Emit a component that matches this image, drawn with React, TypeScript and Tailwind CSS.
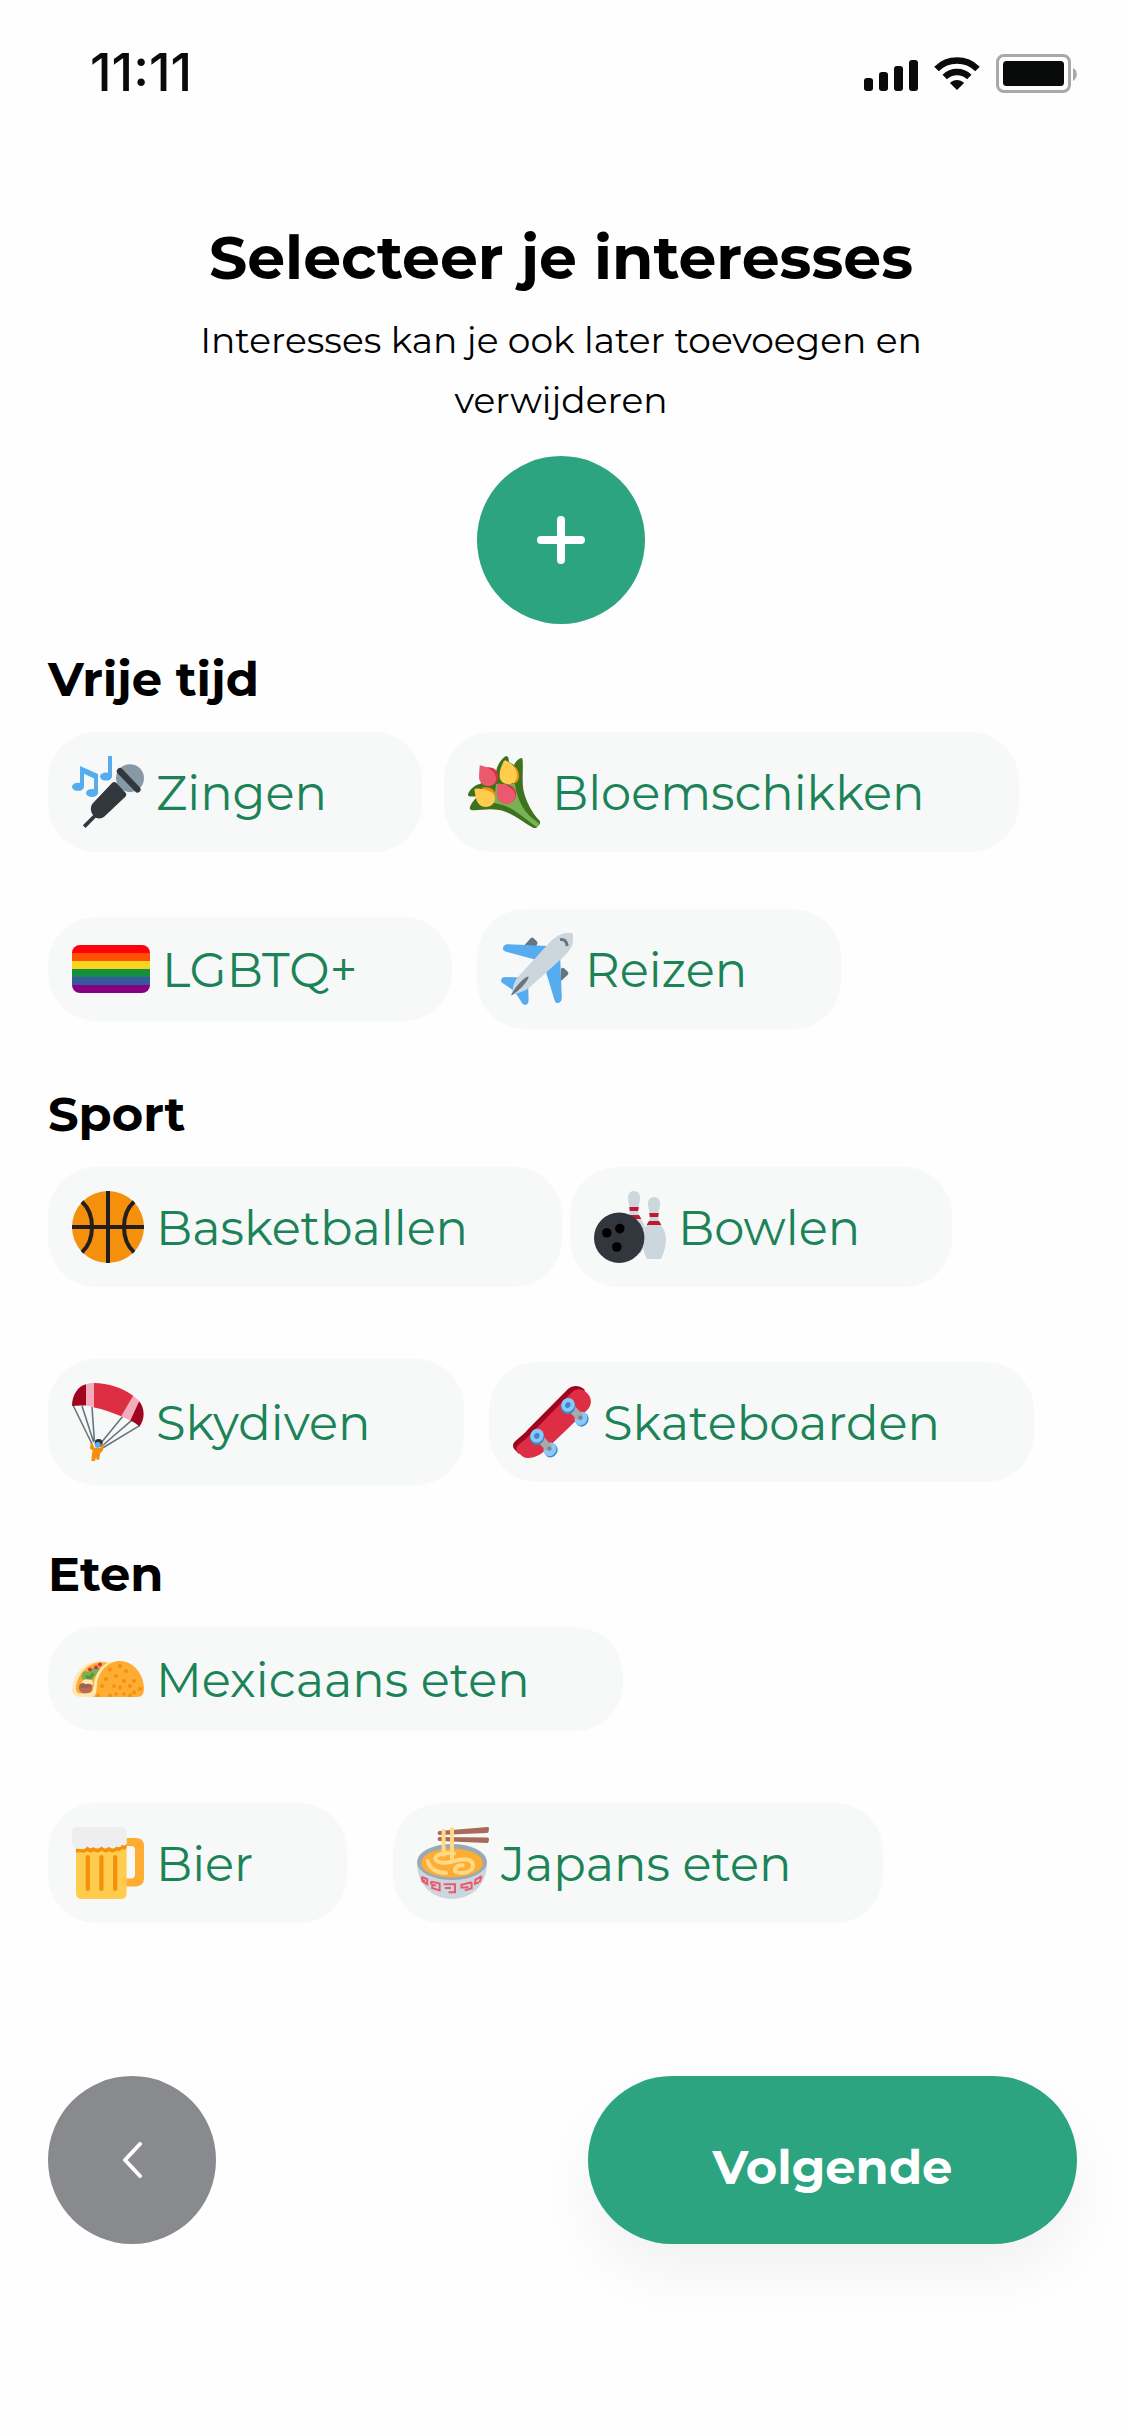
import type { ReactNode } from 'react';

function MicIcon() {
  return (
    <svg viewBox="0 0 36 36" className="h-[72px] w-[72px] shrink-0" aria-hidden="true">
      <g fill="#55ACEE">
        <ellipse cx="3" cy="15.4" rx="3" ry="2" />
        <ellipse cx="10" cy="18.5" rx="3" ry="2" />
        <path d="M4 5l9 4v9.5h-2v-7.2L6 8.9v6.5H4z" />
        <ellipse cx="17" cy="10.3" rx="3" ry="2" />
        <path d="M18 0h2v10.3h-2z" />
      </g>
      <circle cx="29" cy="11.1" r="7" fill="#8899A6" />
      <path d="M24 7.6l8.7 9.1" stroke="#31373D" strokeWidth="3.2" strokeLinecap="round" />
      <path d="M11.4 30l-5.3 5.3" stroke="#31373D" strokeWidth="1.9" />
      <path
        fill="#31373D"
        d="M22.3 13.6l4.5 4.8q.8.9 0 1.8L16.2 30.3q-1.6 1.4-4 .7-2.6-1.8-2.8-4.4-.1-1.5.8-2.7L20 13.5q1.2-1.1 2.3.1z"
      />
    </svg>
  );
}

function TulipsIcon() {
  return (
    <svg viewBox="0 0 36 36" className="h-[72px] w-[72px] shrink-0" aria-hidden="true">
      <path
        fill="#3E721D"
        d="M14 8C14.5 4.5 17 .8 19.2 0q1.2 0 1.3 3L23 4.5C24 2.5 25.6 1 26.8 1q.6 0 .6 2.500c.1 5-.4 9.500.3 13.500 1.300 6 4.300 11.300 8 15.300q.7.900 0 2l-1.400 1.400q-.7.600-1.800 0C27.500 33.400 22 28 15.500 27 10 26 5 27.500 1.800 27q-1.300-.2-.8-1.500.6-2 3-4.500L5 20c-2 .4-4.800.5-5-.4 0-2 3-5.100 6-5.600z"
      />
      <path fill="#77B255" d="M14 14h9.500c.5 5 3 11 6 14.500 2 2.500 4 3.500 6.200 5.400L34 36C30 34 26 30 22 27c-3-2-6-3-9-3.500z" />
      <path d="M16.500 25c6 1 12 7.500 17.500 11" stroke="#3E721D" strokeWidth="1.200" fill="none" />
      <path fill="#DD2E44" d="M9 5.800c3.500-.6 6 1.200 6 4.700 0 2.500-1.500 4-3.500 4.300z" />
      <path fill="#EA596E" d="M5.800 5.200q0-.6.7-.5C10 5.500 14 7.500 14 11.200c0 2.300-1.700 3.800-4 3.800-2.900 0-4.500-2-4.500-4.700z" />
      <path fill="#F4900C" d="M20.500 4c3.500.6 5 3.300 5 6 0 2-1 3.500-3 4z" />
      <path fill="#FFCC4D" d="M17.800 2.800q.3-.8 1.200-.5c3.500 1.700 5.500 4.500 5.500 7.400 0 2.700-1.700 4.300-4.200 4.300-2.800 0-4.500-1.700-4.500-4.300 0-2.500.9-4.700 2-6.900z" />
      <path fill="#F4900C" d="M6.800 15.900c3.800-.8 6.900.6 6.900 4 0 1.200-.5 2.300-1.300 3z" />
      <path fill="#FFCC4D" d="M3.200 16.900q.1-.6.900-.6c5.200.2 9.400 1.700 9.400 5 0 2.500-2 4.200-4.600 4.200-3 0-4.500-2.200-5-4.700z" />
      <path fill="#DD2E44" d="M18.500 14c3.500.3 5.500 2.500 5.500 5.200 0 1.700-.6 3-1.600 3.600z" />
      <path fill="#EA596E" d="M14.700 14.300q.1-.6 1-.5c4.300.7 8 3 8 6.300 0 2.400-2 3.900-4.200 3.900-3.100 0-5-2-5-4.900z" />
    </svg>
  );
}

function PrideFlagIcon() {
  return (
    <svg viewBox="0 0 78 48" className="h-[48px] w-[78px] shrink-0" aria-hidden="true">
      <defs>
        <clipPath id="flag-clip">
          <rect width="78" height="48" rx="8" />
        </clipPath>
      </defs>
      <g clipPath="url(#flag-clip)">
        <path fill="#FF000E" d="M0 0h78v8H0z" />
        <path fill="#FF5000" d="M0 8h78v8H0z" />
        <path fill="#FAD220" d="M0 16h78v8H0z" />
        <path fill="#138F3E" d="M0 24h78v8H0z" />
        <path fill="#3558A0" d="M0 32h78v8H0z" />
        <path fill="#880082" d="M0 40h78v8H0z" />
      </g>
    </svg>
  );
}

function PlaneIcon() {
  return (
    <svg viewBox="0 0 36 36" className="h-[72px] w-[72px] shrink-0" aria-hidden="true">
      <path fill="#66757F" d="M11.800 6l3-3.400q.8-.7 1.500 0l1.700 1.600q.6.700 0 1.500L17.500 7zM30 24l3.300-3q.8-.8.1-1.600l-1.700-1.700q-.9-.7-1.700.2z" />
      <path
        fill="#55ACEE"
        d="M23.500 6.500L3.500 5.600C1.200 5.500.5 7.800 1.300 8.600q.4.500 1.700.9L17 13.300zM29.600 12.200l.8 20.300c0 2.300-2 3.100-3 2.200q-.5-.5-.9-2L22.500 19.500zM10 22.300L2.200 22C-.1 22-.5 24.200.7 25q4 2.600 5.800 4 1.900 2.500 4 6c1.200 1.700 3.300 1 3.300-1.200L13.600 26z"
      />
      <path
        fill="#CCD6DD"
        d="M33 0h2.200q.8 0 .8.9V4c0 2.500-2.400 5.600-4.500 7.700L14.500 27C11.500 29.600 8 30 5 31.200c1-3 1-6 3-8.700L24.500 4.500C26.600 2.200 30 0 33 0z"
      />
      <path fill="#66757F" d="M13.800 21.800c.3 1.500-4.700 7.600-8.800 9.500 1.400-3.400 6.500-9.500 8.800-9.500z" />
      <path d="M29.500 3.300q3.200-.6 3.600 3.300" fill="none" stroke="#66757F" strokeWidth="1.500" />
    </svg>
  );
}

function BasketballIcon() {
  return (
    <svg viewBox="0 0 36 36" className="h-[72px] w-[72px] shrink-0" aria-hidden="true">
      <circle cx="18" cy="18" r="18" fill="#F4900C" />
      <path
        d="M18 0v36M0 18h36M5 5.400c3.300 3 5 7.600 5 12.600s-1.700 9.600-5 12.600M31 5.400c-3.300 3-5 7.600-5 12.600s1.700 9.600 5 12.600"
        fill="none"
        stroke="#231F20"
        strokeWidth="2"
      />
    </svg>
  );
}

function Pin({ x, y }: { x: number; y: number }) {
  return (
    <g transform={`translate(${x} ${y})`}>
      <path
        fill="#CCD6DD"
        d="M0 0c2 0 3 1.600 3 3.500C3 6 2 7 2.100 10c.2 4 3.900 5.500 3.900 11 0 4-1.300 7.500-2.500 10h-7C-4.700 28.500-6 25-6 21c0-5.500 3.700-7 3.900-11C-2 7-3 6-3 3.500-3 1.600-2 0 0 0z"
      />
      <path fill="#BE1931" d="M-2.400 8h4.800l-.3 2h-4.200zM-2.500 12h5l1.200 2h-7.400z" />
    </g>
  );
}

function BowlingIcon() {
  return (
    <svg viewBox="0 0 36 36" className="h-[72px] w-[72px] shrink-0" aria-hidden="true">
      <Pin x={20} y={0} />
      <Pin x={30} y={3} />
      <circle cx="12.600" cy="23.400" r="12.600" fill="#31373D" />
      <circle cx="6.400" cy="20.900" r="2.400" />
      <circle cx="12.900" cy="18.800" r="2.400" />
      <circle cx="11.400" cy="28" r="2.400" />
    </svg>
  );
}

function ParachuteIcon() {
  return (
    <svg viewBox="0 0 36 39" className="h-[78px] w-[72px] shrink-0" aria-hidden="true">
      <path
        d="M.7 11.500l9.300 19M5 11.500l5.800 18M10 12l1.200 17M25.500 16.500L14.500 30M29.800 18.700L15 31.500M33.800 21.300L15.500 32.400"
        stroke="#66757F"
        strokeWidth=".8"
        fill="none"
      />
      <path fill="#A0041E" d="M0 11.500C0 6 3 1.500 7 .6v10.700q-4-.2-7 .2zM33.500 9c2.500 3 3.500 8 .3 12.700q-2.500-2-5-3.200z" />
      <path fill="#F4ABBA" d="M7 .6Q9 0 11 0v12.200q-2-.7-4-.9zM30.600 6.400q1.600 1.200 3 2.600l-4.400 9.800q-2.500-1.300-4.700-2.200z" />
      <path fill="#DD2E44" d="M11 0c7 0 14.500 2.500 19.600 6.400l-6 10.200C20.500 14.800 15.500 13 11 12.200z" />
      <circle cx="13.300" cy="30" r="2" fill="#292F33" />
      <circle cx="12.900" cy="31" r="1.500" fill="#5DADEC" />
      <path
        fill="#F4900C"
        d="M9.300 30l.9.300.9 1.900q2 .6 3.300 0l.4-1.700 1.100.3-.3 2.500q-.3 1.200-1.400 1.600l-.6 3.400-1.200.2-.4-1.200-.5 1.700H9.700l.2-2.700.4-2.600-1.300-1z"
      />
    </svg>
  );
}

function Truck({ x, y }: { x: number; y: number }) {
  return (
    <g transform={`translate(${x} ${y})`}>
      <ellipse cx="7" cy="7" rx="3.200" ry="3.600" transform="rotate(30 7 7)" fill="#3B88C3" />
      <ellipse cx="6.500" cy="6.500" rx="3.100" ry="3.500" transform="rotate(30 6.500 6.500)" fill="#88C9F9" />
      <path d="M2 1.600l4 4.300" stroke="#A7A9AC" strokeWidth="4" />
      <circle cx="6.200" cy="6.100" r="1.100" fill="#808285" />
      <ellipse cx=".3" cy=".4" rx="3.600" ry="3.800" transform="rotate(30)" fill="#3B88C3" />
      <ellipse cx="-.2" cy="-.3" rx="3.300" ry="3.500" transform="rotate(30)" fill="#88C9F9" />
      <ellipse cx="-.2" cy="-.2" rx="1.300" ry="1.500" transform="rotate(30)" fill="#3B88C3" />
    </g>
  );
}

function SkateboardIcon() {
  return (
    <svg viewBox="0 0 39 36" className="h-[72px] w-[78px] shrink-0" aria-hidden="true">
      <path fill="#A0041E" d="M0 30c0-1.300.5-2 1.500-2.800C4 25 5.500 24 7.500 21.600L27.500 1.500C30-.7 33.500-.4 36 2L3 34 .8 31.700Q0 31 0 30z" />
      <path
        fill="#DD2E44"
        d="M2 32.500c-.8-1.300-.2-2.300 1-3.300 2.300-1.800 4-3 6-5.300L29.300 3.200c2.500-2.300 5.700-1.900 7.900.5 2.400 2.400 2.300 5.800 0 8.200L17 31.300C14 34.500 11 36 7.800 36c-2.300 0-3-.7-4.300-2z"
      />
      <Truck x={12} y={25.2} />
      <Truck x={27.5} y={9.8} />
    </svg>
  );
}

function TacoIcon() {
  return (
    <svg viewBox="0 0 36 18" className="h-[36px] w-[72px] shrink-0" aria-hidden="true">
      <path fill="#FFE8B6" d="M0 14.500C0 7 6 0 14 0c2.500 0 8 .5 9 2L13.500 18H5c-3 0-5-1-5-3.500z" />
      <path fill="#FFAC33" d="M2 14C2 8 7 .8 14.500.6q2.500 0 3.500.5L10 15.500l-6 .8q-2-.3-2-2.300z" />
      <path fill="#77B255" d="M5 7.500q-.5-1.500 1.200-2.300 1-.2 2 .3 2-2.300 5-2.700l1 1.500-4.500 5.500-3.500-.4q-2 0-1.200-1.900z" />
      <path fill="#5C913B" d="M6.500 7.500q1.400-1 2.200.3l1.700-2 .8 1-2 2.200-2.200-.2z" />
      <g fill="#DD2E44">
        <circle cx="9" cy="4.200" r="1" />
        <circle cx="12" cy="3.300" r="1" />
        <circle cx="14" cy="1.700" r="1" />
      </g>
      <path fill="#FFE8B6" d="M5 10.500q1-2 3-1.200 2.400 0 2.500 1.500l-1 2.200H5z" />
      <path fill="#C1694F" d="M3.700 12q1.500-1.400 3-.4 2-.7 3.400.6.400 4-3.400 4.100-4-.2-3-4.300z" />
      <path fill="#9B6258" d="M3.700 12q1.500-1.400 3-.4 2-.7 3.400.6l-.4 1.700-1.300-.8-1.500.8-1.500-.7-1.700.5z" />
      <path fill="#FFE8B6" d="M5 18c5 0 5.500-2 6-6.500C11.600 6 15 .8 20.500.2L23 1 14 18z" />
      <path fill="#FFAC33" d="M10.500 18c2.300-1.500 1.500-4.500 2.200-8C13.800 5 18 0 24 0c6.500 0 12 6.500 12 13.500 0 3-1 4.500-3.500 4.500z" />
      <g fill="#F4900C">
        <circle cx="24" cy="2.500" r="1" />
        <circle cx="19" cy="4.200" r="1" />
        <circle cx="27" cy="5" r="1" />
        <circle cx="22" cy="7.500" r="1" />
        <circle cx="17" cy="9" r="1" />
        <circle cx="26" cy="10" r="1" />
        <circle cx="31" cy="10" r="1" />
        <circle cx="15" cy="12.500" r="1" />
        <circle cx="21" cy="12.500" r="1" />
        <circle cx="24" cy="13.300" r="1" />
        <circle cx="29" cy="12.500" r="1" />
        <circle cx="34" cy="14" r="1" />
        <circle cx="31" cy="15.700" r="1" />
        <circle cx="13" cy="17.200" r=".9" />
        <circle cx="19" cy="17.200" r=".9" />
        <circle cx="22" cy="16.500" r=".9" />
        <circle cx="26" cy="16.500" r=".9" />
        <circle cx="29" cy="17.200" r=".9" />
      </g>
    </svg>
  );
}

function BeerIcon() {
  return (
    <svg viewBox="0 0 36 36" className="h-[72px] w-[72px] shrink-0" aria-hidden="true">
      <path
        fill="#FFAC33"
        fillRule="evenodd"
        d="M26 5.500h6q4 0 4 4v16q0 4.200-4 4.200h-6zM27 9.500v16.300h2.500q2 0 2-2V11.500q0-2-2-2z"
      />
      <path fill="#FFCC4D" d="M2 7h25.300v26q0 3-3 3H5q-3 0-3-3z" />
      <path
        fill="#F4900C"
        d="M2 8h25.300v2.500q-.8 1.400-2.300.4-1 1.900-2.700.9-2 1.900-3.800.2-1.800 1.600-3.600-.2-2 1.900-4 .2-1.700 1.500-3.100 0-2 1.500-3.800.5-1.200.6-2 0z"
      />
      <path
        fill="#EEEEEE"
        d="M2.500 0H25q2.400 0 2.400 2.400v6q-.8 1.500-2.400.5-1.100 2-2.800.8-1.900 2.100-3.800.2-1.800 1.800-3.600-.2-2 2-4 .3-1.600 1.400-3-.3Q6.300 11.500 4 11 0 11 0 8V2.500Q0 0 2.500 0z"
      />
      <path d="M7.900 15v16M14.700 15v16M21.600 15v16" stroke="#F4900C" strokeWidth="2.100" strokeLinecap="round" />
    </svg>
  );
}

function RamenIcon() {
  return (
    <svg viewBox="0 0 36 36" className="h-[72px] w-[72px] shrink-0" aria-hidden="true">
      <path fill="#CCD6DD" d="M0 18c0 11 8 18 17.500 18S35 29 35 18z" />
      <ellipse cx="17.500" cy="17.500" rx="17.500" ry="9" fill="#9AAAB4" />
      <ellipse cx="17.500" cy="18" rx="15.500" ry="7.200" fill="#FFAC33" />
      <path fill="#AA695B" d="M35.300 0q.7 0 .7.600l-.2 1.700q-.1.700-.8.700L11.200 4q-.9-.1-.9-1t.9-1zM11.200 5L35.300 5.200q.7.100.7.700l-.2 1.500q-.1.600-.8.600L11.200 7q-.9-.1-.9-1t.9-1z" />
      <g fill="none" stroke="#FFD983" strokeWidth="2" strokeLinecap="round">
        <path d="M13.300 2v12M17.500 1v15" />
        <path d="M5.300 17c1 4 5 6 9.200 6" />
        <path d="M18.500 13.200c-5-.6-9.300.8-9.300 2.600 0 2 4.500 2.700 8.300 1.500 5-1.800 10.500-1.500 10.500 1.700 0 2.800-3 4-6 4-2.500 0-3.500-1-2.800-2.200.6-1.100 2-1.800 3.800-1.600" />
      </g>
      <g fill="none" stroke="#EA596E" strokeWidth="1">
        <path d="M13.300 28.600h5.700v4h-3.200M14 30.500h3" />
        <path d="M7 27.300l4.300 1v3.400L7.600 30.500v-1.700l2 .5M7 27.300v1.300" />
        <path d="M2.300 24.900l2.800 1.200v2.500l-2.200-1.500 1-.6M2.300 24.900l.5 2" />
        <path d="M27.300 27.600l-5.100 1.300v1.300h2.500M27.300 27.600v3l-3.400 1.100M24.500 30.200l1.200-.3" />
        <path d="M32.300 24.600l-3.100 1.800-.2 2 2-.7M32.300 24.600l-1 3" />
      </g>
    </svg>
  );
}

function StatusIcons() {
  return (
    <div className="flex items-center gap-4">
      <svg viewBox="0 0 54 31" className="mt-1 h-[31px] w-[54px]" fill="#090B0A" aria-hidden="true">
        <rect x="0" y="18" width="9" height="13" rx="3" />
        <rect x="15" y="12" width="9" height="19" rx="3" />
        <rect x="30" y="6" width="9" height="25" rx="3" />
        <rect x="45" y="0" width="9" height="31" rx="3" />
      </svg>
      <svg viewBox="0 0 46 33" className="h-[33px] w-[46px]" aria-hidden="true">
        <path d="M2.500 12C14 .8 32 .8 43.500 12" fill="none" stroke="#090B0A" strokeWidth="6.500" />
        <path d="M10.700 20c7-6.700 17.600-6.700 24.600 0" fill="none" stroke="#090B0A" strokeWidth="6.300" />
        <path d="M15.900 26c4-4 10.200-4 14.200 0L23 33z" fill="#090B0A" />
      </svg>
      <svg viewBox="0 0 81 39" className="h-[39px] w-[81px]" aria-hidden="true">
        <rect x="1.500" y="1.500" width="72" height="36" rx="6.500" fill="none" stroke="#A9A9A9" strokeWidth="3" />
        <rect x="7" y="7" width="61" height="25" rx="3.500" fill="#090B0A" />
        <path d="M77 14c5 2 5 10 0 13z" fill="#A9A9A9" />
      </svg>
    </div>
  );
}

interface Interest {
  label: string;
  icon: ReactNode;
  size: string;
}

interface Group {
  title: string;
  spacing: string;
  rows: { gap: string; items: Interest[] }[];
}

const GROUPS: Group[] = [
  {
    title: 'Vrije tijd',
    spacing: 'mt-[25px] gap-[57px]',
    rows: [
      {
        gap: 'gap-[22px]',
        items: [
          { label: 'Zingen', icon: <MicIcon />, size: 'h-[120px] w-[374px]' },
          { label: 'Bloemschikken', icon: <TulipsIcon />, size: 'h-[120px] w-[575px]' },
        ],
      },
      {
        gap: 'gap-[25px]',
        items: [
          { label: 'LGBTQ+', icon: <PrideFlagIcon />, size: 'h-[104px] w-[404px]' },
          { label: 'Reizen', icon: <PlaneIcon />, size: 'h-[120px] w-[364px]' },
        ],
      },
    ],
  },
  {
    title: 'Sport',
    spacing: 'mt-[55px] gap-[72px]',
    rows: [
      {
        gap: 'gap-2',
        items: [
          { label: 'Basketballen', icon: <BasketballIcon />, size: 'h-[120px] w-[514px]' },
          { label: 'Bowlen', icon: <BowlingIcon />, size: 'h-[120px] w-[382px]' },
        ],
      },
      {
        gap: 'gap-[25px]',
        items: [
          { label: 'Skydiven', icon: <ParachuteIcon />, size: 'h-[126px] w-[416px]' },
          { label: 'Skateboarden', icon: <SkateboardIcon />, size: 'h-[120px] w-[545px]' },
        ],
      },
    ],
  },
  {
    title: 'Eten',
    spacing: 'mt-[59px] gap-[72px]',
    rows: [
      {
        gap: 'gap-[22px]',
        items: [{ label: 'Mexicaans eten', icon: <TacoIcon />, size: 'h-[104px] w-[575px]' }],
      },
      {
        gap: 'gap-[46px]',
        items: [
          { label: 'Bier', icon: <BeerIcon />, size: 'h-[120px] w-[299px]' },
          { label: 'Japans eten', icon: <RamenIcon />, size: 'h-[120px] w-[490px]' },
        ],
      },
    ],
  },
];

function InterestChip({ label, icon, size }: Interest) {
  return (
    <button
      type="button"
      className={`${size} flex items-center gap-3 rounded-[48px] bg-[#F7F9F8] pl-6 text-[48px] leading-[60px] whitespace-nowrap text-[#1B8357]`}
    >
      {icon}
      <span className="pt-[2px]">{label}</span>
    </button>
  );
}

export default function App() {
  return (
    <div className='min-h-screen bg-[#FEFEFE] font-["Montserrat","Inter",sans-serif] text-black'>
      {/* Status bar */}
      <header className="flex h-[146px] items-center justify-between pr-12 pl-[90px]">
        <span className='font-["Inter",sans-serif] text-[52px] leading-[60px] font-medium text-[#090B0A]'>11:11</span>
        <StatusIcons />
      </header>

      <main className="px-12">
        <div className="mt-[72px] flex flex-col items-center pr-[3px] text-center">
          <h1 className="text-[60px] leading-[80px] font-bold">Selecteer je interesses</h1>
          <p className="mt-3 max-w-[760px] text-[36px] leading-[60px]">
            Interesses kan je ook later toevoegen en verwijderen
          </p>
          <button
            type="button"
            aria-label="Interesse toevoegen"
            className="mt-[26px] flex h-[168px] w-[168px] items-center justify-center rounded-full bg-[#2CA480]"
          >
            <svg viewBox="0 0 48 48" className="h-12 w-12" aria-hidden="true">
              <path d="M24 4v40M4 24h40" stroke="#fff" strokeWidth="8" strokeLinecap="round" />
            </svg>
          </button>
        </div>

        {GROUPS.map((group) => (
          <section key={group.title} className={`${group.spacing} flex flex-col`}>
            {group.rows.map((row, i) => (
              <div key={row.items[0].label}>
                {i === 0 && <h2 className="mb-[23px] text-[48px] leading-[60px] font-bold">{group.title}</h2>}
                <div className={`${row.gap} flex flex-wrap items-center`}>
                  {row.items.map((item) => (
                    <InterestChip key={item.label} {...item} />
                  ))}
                </div>
              </div>
            ))}
          </section>
        ))}
      </main>

      {/* Navigation */}
      <footer className="mt-[153px] flex items-center justify-between px-12 pb-48">
        <button
          type="button"
          aria-label="Terug"
          className="flex h-[168px] w-[168px] items-center justify-center rounded-full bg-[#898A8D]"
        >
          <svg viewBox="0 0 20 36" className="h-9 w-5" aria-hidden="true">
            <path d="M18 2L3 18l15 16" fill="none" stroke="#fff" strokeWidth="4" strokeLinecap="round" strokeLinejoin="round" />
          </svg>
        </button>
        <button
          type="button"
          className="h-[168px] w-[489px] rounded-full bg-[#2CA480] pt-[14px] text-[48px] leading-[60px] font-bold text-white shadow-[0_30px_60px_rgba(0,0,0,0.05)]"
        >
          Volgende
        </button>
      </footer>
    </div>
  );
}
